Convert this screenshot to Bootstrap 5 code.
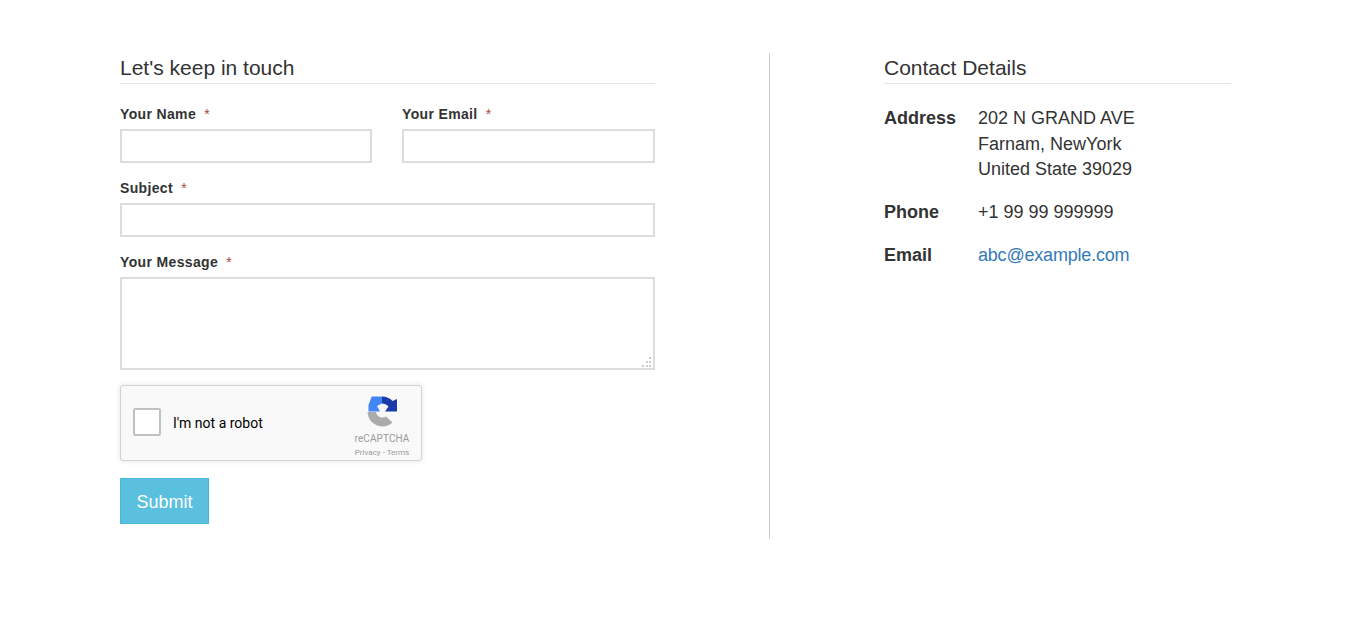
<!DOCTYPE html>
<html lang="en">
<head>
<meta charset="utf-8">
<title>Contact</title>
<link href="https://cdn.jsdelivr.net/npm/bootstrap@5.3.0/dist/css/bootstrap.min.css" rel="stylesheet">
<style>
body{font-family:"Liberation Sans",Arial,sans-serif;color:#333;background:#fff;font-size:14px}
.page-wrap{padding:53px 118px 0 120px}
.form-col{width:535px;flex:none}
.split-rule{width:1px;background:#ccc;height:486px;margin:0 114px;flex:none}
.info-col{width:347px;flex:none}
.sect-title{font-size:21px;line-height:22px;font-weight:400;margin:4px 0 0;padding-bottom:4px;border-bottom:1px solid #e5e5e5;color:#333}
.field-label{display:block;font-size:14px;line-height:20px;font-weight:700;letter-spacing:.35px;margin-bottom:5px;color:#333}
.req{color:#a94442;font-weight:400;margin-left:4px}
.field-box{display:block;width:100%;height:34px;border:2px solid #ddd;border-radius:0;background:#fff;padding:4px 8px}
.field-area{height:93px;resize:none}
.area-wrap{position:relative}
.area-grip{position:absolute;right:4px;bottom:3px;display:block}
.field-row{display:flex;gap:30px;padding-top:20px}
.field-row>div{width:252px}
.field-row>div+div{width:253px}
.field-one{padding-top:15px}
.cap-box{width:302px;height:76px;margin-top:15px;background:#f9f9f9;border:1px solid #d3d3d3;border-radius:3px;box-shadow:0 0 4px 1px rgba(0,0,0,.08);padding:0 8px 0 12px;font-family:Roboto,"Liberation Sans",sans-serif}
.cap-check{width:28px;height:28px;background:#fff;border:2px solid #c1c1c1;border-radius:2px;flex:none;margin-bottom:2px}
.cap-text{font-size:14px;color:#000;margin-left:12px}
.cap-brand{width:62px;text-align:center;padding-top:10px;line-height:1;margin-left:auto;align-self:flex-start}
.cap-brand svg{display:block;margin:0 auto}
.cap-name{font-size:10px;letter-spacing:.1px;color:#9b9b9b;margin-top:6px}
.cap-links{font-size:8px;color:#999;margin-top:5px;white-space:nowrap}
.send-btn{margin-top:17px;background:#5bc0de;border:1px solid #46b8da;border-radius:0;color:#fff;font-size:18px;line-height:24px;width:89px;height:46px;padding:1px 0 0}
.send-btn:hover{background:#5bc0de;border-color:#46b8da;color:#fff}
.info-list{margin:22px 0 0;font-size:18px;line-height:25.6px}
.info-row{display:flex;margin-bottom:17.5px}
.info-key{width:94px;font-weight:700;flex:none}
.info-val{color:#333}
.info-val a{color:#337ab7;text-decoration:none;letter-spacing:-.2px}
</style>
</head>
<body>
<main class="page-wrap d-flex">
  <section class="form-col">
    <h2 class="sect-title">Let's keep in touch</h2>
    <form>
      <div class="field-row">
        <div><label class="field-label" for="n">Your Name <span class="req">*</span></label><input class="field-box" id="n" type="text"></div>
        <div><label class="field-label" for="e">Your Email <span class="req">*</span></label><input class="field-box" id="e" type="email"></div>
      </div>
      <div class="field-one"><label class="field-label" for="s">Subject <span class="req">*</span></label><input class="field-box" id="s" type="text"></div>
      <div class="field-one"><label class="field-label" for="m">Your Message <span class="req">*</span></label>
        <div class="area-wrap">
          <textarea class="field-box field-area" id="m"></textarea>
          <svg class="area-grip" width="9" height="10" viewBox="0 0 9 10" fill="#ccc" aria-hidden="true">
            <rect x="7" y="0" width="2" height="2"/><rect x="4" y="4" width="2" height="2"/><rect x="7" y="4" width="2" height="2"/>
            <rect x="0" y="8" width="2" height="2"/><rect x="4" y="8" width="2" height="2"/><rect x="7" y="8" width="2" height="2"/>
          </svg>
        </div>
      </div>
      <div class="cap-box d-flex align-items-center">
        <div class="cap-check"></div>
        <div class="cap-text">I'm not a robot</div>
        <div class="cap-brand">
          <svg width="32" height="32" viewBox="0 0 32 32" aria-hidden="true">
            <path d="M16 .5C20 .5 24 2 26.500 5L31 3V15.500H19L22.500 10.500C21 8.500 18 7.500 16 7.500Z" fill="#1c3aa9"/>
            <path d="M5.700.5H16V7.500L11 10L14 15.500H2.500V9Z" fill="#4285f4"/>
            <path d="M1.500 16H10A6.500 6.500 0 0 0 20 20.500L26.500 26.500A15 15 0 0 1 1.500 16Z" fill="#ababab"/>
          </svg>
          <div class="cap-name">reCAPTCHA</div>
          <div class="cap-links">Privacy - Terms</div>
        </div>
      </div>
      <button class="btn send-btn d-block" type="button">Submit</button>
    </form>
  </section>
  <div class="split-rule"></div>
  <section class="info-col">
    <h2 class="sect-title">Contact Details</h2>
    <div class="info-list">
      <div class="info-row"><div class="info-key">Address</div><div class="info-val">202 N GRAND AVE<br>Farnam, NewYork<br>United State 39029</div></div>
      <div class="info-row"><div class="info-key">Phone</div><div class="info-val">+1 99 99 999999</div></div>
      <div class="info-row"><div class="info-key">Email</div><div class="info-val"><a href="#">abc@example.com</a></div></div>
    </div>
  </section>
</main>
<script src="https://cdn.jsdelivr.net/npm/bootstrap@5.3.0/dist/js/bootstrap.bundle.min.js"></script>
</body>
</html>
